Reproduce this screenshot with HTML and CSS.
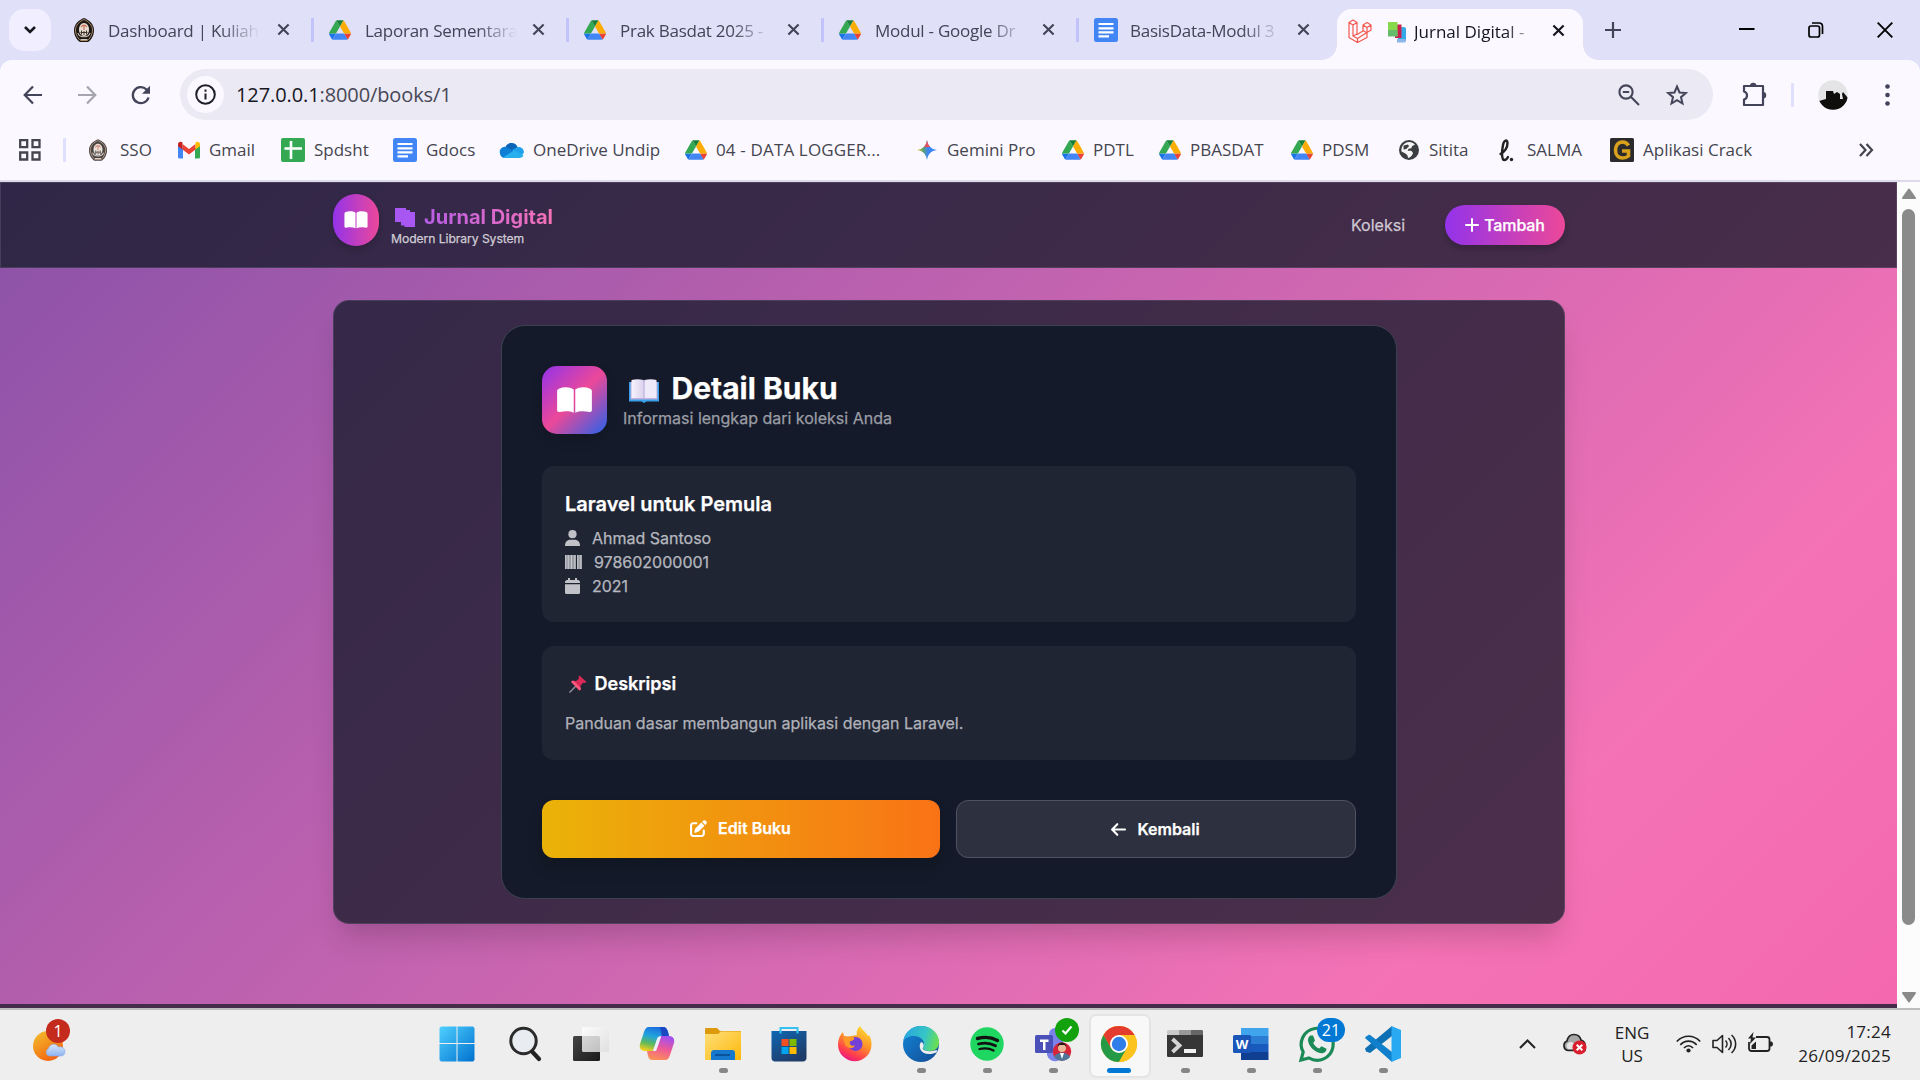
FILE: index.html
```html
<!DOCTYPE html>
<html lang="id">
<head>
<meta charset="utf-8">
<title>Jurnal Digital</title>
<link rel="stylesheet" href="styles.css">
</head>
<body>
<svg class="defs" aria-hidden="true">
  <defs>
    <linearGradient id="g-win" x1="0" y1="0" x2="1" y2="1"><stop offset="0" stop-color="#4fd0ff"/><stop offset="1" stop-color="#0071cf"/></linearGradient>
    <linearGradient id="g-sun" x1="0" y1="0" x2="0.6" y2="1"><stop offset="0" stop-color="#f2c22e"/><stop offset="1" stop-color="#f4640f"/></linearGradient>
    <linearGradient id="g-cloud" x1="0" y1="0" x2="0" y2="1"><stop offset="0" stop-color="#d9e8fd"/><stop offset="1" stop-color="#8db4ee"/></linearGradient>
    <linearGradient id="g-dark" x1="0" y1="0" x2="1" y2="1"><stop offset="0" stop-color="#444"/><stop offset="1" stop-color="#1b1b1b"/></linearGradient>
    <linearGradient id="g-light" x1="0" y1="0" x2="1" y2="1"><stop offset="0" stop-color="#fff"/><stop offset="1" stop-color="#ddd"/></linearGradient>
    <linearGradient id="g-cop1" x1="0.6" y1="0" x2="0.3" y2="1"><stop offset="0" stop-color="#1c6be0"/><stop offset="0.4" stop-color="#22a5dc"/><stop offset="0.7" stop-color="#5cb860"/><stop offset="1" stop-color="#f3cf1c"/></linearGradient>
    <linearGradient id="g-cop2" x1="0.6" y1="0" x2="0.3" y2="1"><stop offset="0" stop-color="#a14ff0"/><stop offset="0.5" stop-color="#ee5a96"/><stop offset="1" stop-color="#fb9255"/></linearGradient>
    <linearGradient id="g-fold" x1="0" y1="0" x2="1" y2="1"><stop offset="0" stop-color="#ffdf7b"/><stop offset="1" stop-color="#fdb80a"/></linearGradient>
    <linearGradient id="g-store" x1="0" y1="0" x2="0.6" y2="1"><stop offset="0" stop-color="#0f66b4"/><stop offset="1" stop-color="#1f3c68"/></linearGradient>
    <linearGradient id="g-fox" x1="0.8" y1="0" x2="0.3" y2="1"><stop offset="0" stop-color="#ffe033"/><stop offset="0.45" stop-color="#ff9328"/><stop offset="0.8" stop-color="#ff3a50"/><stop offset="1" stop-color="#e5158a"/></linearGradient>
    <linearGradient id="g-edge" x1="0" y1="0.3" x2="1" y2="0.5"><stop offset="0" stop-color="#2aa6df"/><stop offset="0.6" stop-color="#35c5c6"/><stop offset="1" stop-color="#6be04f"/></linearGradient>
    <linearGradient id="g-edge2" x1="0" y1="0" x2="1" y2="1"><stop offset="0" stop-color="#1187d8"/><stop offset="1" stop-color="#154a93"/></linearGradient>
    <linearGradient id="g-gem" x1="0" y1="0.5" x2="1" y2="0.5"><stop offset="0" stop-color="#f5c02c"/><stop offset="0.3" stop-color="#5aa469"/><stop offset="0.55" stop-color="#3d86f6"/><stop offset="1" stop-color="#3d86f6"/></linearGradient>
    <linearGradient id="g-page" x1="0" y1="0" x2="1" y2="0"><stop offset="0" stop-color="#f6f3fd"/><stop offset="1" stop-color="#dcd2ee"/></linearGradient>
  </defs>
  <symbol id="drive" viewBox="0 0 87.3 78">
    <path fill="#1a73e8" d="m6.6 66.85 3.85 6.65c.8 1.4 1.95 2.5 3.3 3.3L27.5 53H0c0 1.55.4 3.1 1.2 4.5z"/>
    <path fill="#34a853" d="M43.65 25 29.9 1.2c-1.35.8-2.5 1.9-3.3 3.3L1.2 48.5A9 9 0 0 0 0 53h27.5z"/>
    <path fill="#ea4335" d="M73.55 76.8c1.35-.8 2.5-1.9 3.3-3.3l1.6-2.75L86.1 57.5c.8-1.4 1.2-2.95 1.2-4.5H59.8l5.85 11.5z"/>
    <path fill="#188038" d="M43.65 25 57.4 1.2C56.05.4 54.5 0 52.9 0H34.4c-1.6 0-3.15.45-4.5 1.2z"/>
    <path fill="#4285f4" d="M59.8 53H27.5L13.75 76.8c1.35.8 2.9 1.2 4.5 1.2h50.8c1.6 0 3.15-.45 4.5-1.2z"/>
    <path fill="#fbad05" d="m73.4 26.5-12.7-22c-.8-1.4-1.95-2.5-3.3-3.3L43.65 25 59.8 53h27.45c0-1.55-.4-3.1-1.2-4.5z"/>
  </symbol>
  <symbol id="docs" viewBox="0 0 24 24">
    <rect width="24" height="24" rx="2.5" fill="#4285f4"/>
    <path stroke="#fff" stroke-width="2.2" d="M4.5 6h15M4.5 10.300h15M4.500 14.300h15M4.500 18.300h10.500"/>
  </symbol>
  <symbol id="crest" viewBox="0 0 20 24">
    <path fill="#1d1816" d="M10 0c5 2 10 6 10 12 0 6-3 10-6 12H6c-3-2-6-6-6-12C0 6 5 2 10 0z"/>
    <path fill="none" stroke="#a98a6b" d="M10 1.500c4.500 2 8.500 5.500 8.500 10.500 0 5-3 9-5 10.500h-7C4.500 21 1.500 17 1.500 12 1.500 7 5.500 3.500 10 1.500z"/>
    <path fill="#e9ddd2" d="M10 5c3 0 5 3 5 6.500S13 18 10 18s-5-3-5-6.500S7 5 10 5z"/>
    <path fill="none" stroke="#c9705a" stroke-width="1.200" d="M7 9c2-2.500 4-2.500 6 0M10 7v5"/>
    <path fill="none" stroke="#3b322d" stroke-width="1" d="M7.500 12.500v4M10 13v4M12.500 12.500v4M6.500 14.500h7"/>
    <path fill="none" stroke="#cfc6bb" stroke-width="1.200" d="M4 15c1 5 11 5 12 0M6.500 21.500h7"/>
  </symbol>
  <symbol id="close" viewBox="0 0 14 14"><path stroke="currentColor" stroke-width="2.300" d="M1.500 1.500l11 11M12.500 1.500l-11 11"/></symbol>
  <symbol id="book" viewBox="0 0 36 28">
    <path fill="#fff" d="M17.200 2.600v24.100c-4-1.800-9-1.900-14.500-.8C1.100 26.300 0 25.500 0 24.200V4.200C0 3 .6 2.200 1.800 1.700 7-.4 13-.3 17.200 2.600zM18.800 2.600v24.100c4-1.800 9-1.900 14.500-.8 1.600.4 2.700-.4 2.700-1.700v-20c0-1.200-.6-2-1.800-2.500C29-.4 23-.3 18.800 2.600z"/>
  </symbol>
</svg>

<div class="browser">
  <header class="tabstrip">
    <button class="tab-search"><svg width="14" height="10" viewBox="0 0 14 10"><path fill="none" stroke="#17171f" stroke-width="2.600" d="M2 2l5 5 5-5"/></svg></button>
    <div class="tab"><svg class="fav crest"><use href="#crest"/></svg><span class="label">Dashboard | Kuliah</span><svg class="x"><use href="#close"/></svg></div>
    <div class="tab"><svg class="fav"><use href="#drive"/></svg><span class="label">Laporan Sementara</span><svg class="x"><use href="#close"/></svg></div>
    <div class="tab"><svg class="fav"><use href="#drive"/></svg><span class="label">Prak Basdat 2025 -</span><svg class="x"><use href="#close"/></svg></div>
    <div class="tab"><svg class="fav"><use href="#drive"/></svg><span class="label">Modul - Google Dr</span><svg class="x"><use href="#close"/></svg></div>
    <div class="tab last"><svg class="fav docs"><use href="#docs"/></svg><span class="label">BasisData-Modul 3</span><svg class="x"><use href="#close"/></svg></div>
    <div class="tab active">
      <svg class="fav laravel" viewBox="0 0 24 24"><path fill="none" stroke="#f4574d" stroke-width="1.200" stroke-linejoin="round" d="M1 3.500L5 1l4 2.500v12l6-3.500V6l4-2.500L23 6v5l-4 2.500v5L9.500 23.500 1 18.500zM1 3.500L5 6l4-2.500M5 6v11l4.500 2.500L19 13.500M5 17l4-2M9.500 19.500v4M15 6l4 2.500L23 6M19 8.500v5M15 11.500l4 2.500"/></svg>
      <svg class="books" viewBox="0 0 18 21"><path fill="#35a9e8" d="M10 5.500l6-.5 2 1v13h-8z"/><path fill="#8cb5e8" d="M9 17h8.500v3.500H9z"/><path fill="#c8214d" d="M7 2.500h6.500V16H7z"/><path fill="#87d94b" d="M0 0h9.500v14H0z"/><path fill="#63bd6b" d="M0 8h9.500v6.500H0z"/></svg>
      <span class="label">Jurnal Digital -</span><svg class="x"><use href="#close"/></svg>
    </div>
    <svg class="newtab" width="16" height="16" viewBox="0 0 16 16"><path stroke="#43435a" stroke-width="2.200" d="M8 0v16M0 8h16"/></svg>
    <div class="winctl">
      <svg width="16" height="16" viewBox="0 0 16 16"><path stroke="#000" stroke-width="2" d="M0 7h15.500"/></svg>
      <svg width="16" height="16" viewBox="0 0 16 16"><rect x="1" y="4" width="10.500" height="11" rx="2" fill="none" stroke="#000" stroke-width="1.700"/><path fill="none" stroke="#000" stroke-width="1.700" d="M4 1h7c2 0 3.500 1.500 3.500 3.500V12"/></svg>
      <svg width="16" height="16" viewBox="0 0 16 16"><path stroke="#000" stroke-width="1.900" d="M.7.7l14.600 14.600M15.300.7L.7 15.300"/></svg>
    </div>
  </header>

  <div class="toolbar">
    <svg class="back" width="20" height="20" viewBox="0 0 20 20"><path fill="none" stroke="#43435a" stroke-width="2.200" d="M18 10H1M9 1.500L.7 10 9 18.500"/></svg>
    <svg class="fwd" width="20" height="20" viewBox="0 0 20 20"><path fill="none" stroke="#a6a5af" stroke-width="2.200" d="M0 10h17M9 1.500l8.300 8.500L9 18.500"/></svg>
    <svg class="reload" width="20" height="20" viewBox="0 0 20 20"><path fill="none" stroke="#43435a" stroke-width="2.300" d="M17.500 12.500A8 8 0 1 1 15.500 4.500L18 7"/><path fill="#43435a" d="M19 .8v8h-8z"/></svg>
    <div class="omnibox">
      <span class="info"><svg width="21" height="21" viewBox="0 0 21 21"><circle cx="10.500" cy="10.500" r="9.300" fill="none" stroke="#1f1f27" stroke-width="2"/><path stroke="#1f1f27" stroke-width="2" d="M10.500 9.500v6M10.500 5.500v2.200"/></svg></span>
      <span class="url"><b>127.0.0.1</b>:8000/books/1</span>
      <svg class="mag" width="22" height="22" viewBox="0 0 22 22"><g fill="none" stroke="#45455a" stroke-width="2.100"><circle cx="8" cy="8" r="6.600"/><path d="M12.800 12.800L21 21M4.800 8h6.400"/></g></svg>
      <svg class="star" width="22" height="22" viewBox="0 0 22 22"><path fill="none" stroke="#45455a" stroke-width="2" d="M11 2.500l2.500 6 6.300.5-4.800 4.200 1.500 6.300L11 16.200l-5.500 3.300L7 13.200 2.200 9l6.300-.5z"/></svg>
    </div>
    <svg class="ext" width="25" height="25" viewBox="0 0 25 25"><path fill="none" stroke="#43435a" stroke-width="2.200" stroke-linejoin="round" d="M2 4h19v19H2v-5.500c4-1 4-7 0-8z"/><path fill="#43435a" d="M8 4a3.200 3.200 0 0 1 6.400 0zM21 10a3.200 3.200 0 0 1 0 6.500z"/></svg>
    <i class="vbar"></i>
    <svg class="avatar" width="30" height="30" viewBox="0 0 30 30"><clipPath id="av"><circle cx="15" cy="15" r="14.800"/></clipPath><g clip-path="url(#av)"><path fill="#e4e4e6" d="M0 0h30v30H0z"/><path fill="#100e0d" d="M1 21l7-2V11h7l1 3 3-2 3 2v5h3l-1-5 1-2 5 6v13H3z"/></g></svg>
    <svg class="menu" width="5" height="22" viewBox="0 0 5 22"><g fill="#43435a"><circle cx="2.500" cy="2.500" r="2.300"/><circle cx="2.500" cy="11" r="2.300"/><circle cx="2.500" cy="19.500" r="2.300"/></g></svg>
  </div>

  <nav class="bookmarks">
    <svg class="apps" width="22" height="22" viewBox="0 0 22 22"><g fill="none" stroke="#45454f" stroke-width="2.300"><path d="M1.200 1.200h7v7h-7zM13.500 1.200h7v7h-7zM1.200 13.500h7v7h-7zM13.500 13.500h7v7h-7z"/></g></svg>
    <i class="vbar"></i>
    <a><svg class="s20"><use href="#crest"/></svg>SSO</a>
    <a><svg class="s22" viewBox="0 0 22 17"><path fill="#4285f4" d="M0 3l5 4v10H1.500A1.500 1.500 0 0 1 0 15.500z"/><path fill="#34a853" d="M22 3l-5 4v10h3.500a1.500 1.500 0 0 0 1.500-1.500z"/><path fill="#ea4335" d="M4.500 2.500L11 7.500l6.500-5V8L11 13 4.500 8z"/><path fill="#c5221f" d="M0 3C0 .5 2.500-.6 4.500 1V8L0 4.800z"/><path fill="#fbbc04" d="M22 3c0-2.500-2.500-3.600-4.500-2V8L22 4.800z"/></svg>Gmail</a>
    <a><svg class="s24" viewBox="0 0 24 24"><rect width="24" height="24" rx="2" fill="#34a853"/><path stroke="#fff" stroke-width="2.600" d="M10 3v18M3.500 10.500h17.500"/></svg>Spdsht</a>
    <a><svg class="s24"><use href="#docs"/></svg>Gdocs</a>
    <a><svg class="s24" viewBox="0 0 24 16"><path fill="#0c64b8" d="M5 7a6.500 6.500 0 0 1 12.500-2L12 11z"/><path fill="#0f7fd6" d="M0 11.500A5 5 0 0 1 6 5l8 4-9 7A4.700 4.700 0 0 1 0 11.500z"/><path fill="#1fa0ea" d="M12 8l5.500-3A5.500 5.500 0 0 1 24 10.500L20 15z"/><path fill="#28b0ee" d="M3 15.500L14 8.500l9.500 4.500c-.6 2-2 3-4 3H5c-1 0-1.500-.2-2-.500z"/></svg>OneDrive Undip</a>
    <a class="wide"><svg class="s22"><use href="#drive"/></svg>04 - DATA LOGGER...</a>
    <a><svg class="s22" viewBox="0 0 22 22"><path fill="url(#g-gem)" d="M11 0c1 6.500 4.500 10 11 11-6.500 1-10 4.500-11 11-1-6.500-4.500-10-11-11C6.500 10 10 6.500 11 0z"/><path fill="#e8505a" d="M11 0c.5 3.500 1.800 6 3.500 7.800L7.500 8C9.300 6 10.500 3.500 11 0z"/></svg>Gemini Pro</a>
    <a><svg class="s22"><use href="#drive"/></svg>PDTL</a>
    <a><svg class="s22"><use href="#drive"/></svg>PBASDAT</a>
    <a><svg class="s22"><use href="#drive"/></svg>PDSM</a>
    <a><svg class="s22" viewBox="0 0 22 22"><circle cx="11" cy="11" r="11" fill="#3b3e41"/><path fill="#fff" d="M11 2.200c3 0 5 1 6.500 3l-3 1.500-1 2.500-3 .500-1 2h4l2 2.500-1.500 3-3 2.500c-1 0-1.500-1-1.500-2.500l-2-2-4.800-2.500C2 7 6 2.200 11 2.200z" opacity=".95"/><path fill="#3b3e41" d="M5 6l5-1 1 2-3 3-3 .5z"/></svg>Sitita</a>
    <a><svg class="s16" viewBox="0 0 16 24"><path fill="none" stroke="#222" stroke-width="2.400" stroke-linecap="round" d="M2.500 16c5-3 7-7 7-11S6 2 5 7s-2 15 1.500 15c1.500 0 2.500-1 3.500-3"/><circle cx="13.500" cy="21.500" r="1.700" fill="#222"/></svg>SALMA</a>
    <a><svg class="s24" viewBox="0 0 24 24"><rect width="24" height="24" rx="1.500" fill="#2b2b2d"/><path fill="none" stroke="#d9a11c" stroke-width="3.600" d="M18.500 7.500C17 5 15 4 12.500 4 8 4 5.500 7.500 5.500 12s2.500 8 7 8c2.500 0 4.500-.7 6-2v-5H12"/></svg>Aplikasi Crack</a>
    <svg class="more" width="14" height="14" viewBox="0 0 14 14"><path fill="none" stroke="#45454f" stroke-width="2.200" d="M1 1l5.500 6L1 13M7.500 1L13 7l-5.500 6"/></svg>
  </nav>

  <div class="viewport">
    <div class="page">
      <div class="navbar">
        <div class="brand-icon"><svg width="24" height="18"><use href="#book"/></svg></div>
        <div class="brand">
          <div class="brand-name"><svg width="20" height="19" viewBox="0 0 20 19"><path fill="#a957f3" d="M0 0h11v2h4v2h5v15H9.500v-1.500H6V14H0z"/></svg><span>Jurnal Digital</span></div>
          <div class="brand-sub">Modern Library System</div>
        </div>
        <a class="link">Koleksi</a>
        <a class="add"><svg width="14" height="14" viewBox="0 0 14 14"><path stroke="#fff" stroke-width="2" stroke-linecap="round" d="M7 1v12M1 7h12"/></svg>Tambah</a>
      </div>
      <main class="shell">
        <section class="card">
          <div class="head">
            <div class="head-icon"><svg width="35" height="27"><use href="#book"/></svg></div>
            <div>
              <h1><svg width="30" height="24" viewBox="0 0 30 24"><path fill="#3aa0ea" d="M0 3h30v19.500H17.500l-2.500 1.500-2.500-1.500H0z"/><path fill="#bfb3dc" d="M1.500 3h27v17.500h-27z"/><path fill="url(#g-page)" d="M2.500 1Q9-.5 14.500 1v18H2.500z"/><path fill="#efeaf9" d="M15.500 1Q22-.5 27.500 1v18h-12z"/><path fill="#cfc3e8" d="M14.200 1h1.600v18h-1.600z"/></svg>Detail Buku</h1>
              <p class="lead">Informasi lengkap dari koleksi Anda</p>
            </div>
          </div>
          <div class="box info-box">
            <h2>Laravel untuk Pemula</h2>
            <p><svg width="15" height="16" viewBox="0 0 15 16"><circle cx="7.500" cy="4.200" r="4.100" fill="#c0c2c8"/><path fill="#c0c2c8" d="M0 16c0-4 2-6.200 5.500-6.200h4C13 9.800 15 12 15 16z"/></svg>Ahmad Santoso</p>
            <p><svg width="17" height="14" viewBox="0 0 17 14"><path fill="#9a9ca5" d="M0 0h11v14H0zM12 0h5v14h-5z"/><path stroke="#c6c8cd" d="M.7 0v14M3.300 0v14M6.500 0v14M9.800 0v14M12.800 0v14M15.800 0v14"/></svg>978602000001</p>
            <p><svg width="15" height="16" viewBox="0 0 15 16"><path fill="#c0c2c8" d="M3 0h2v2h5V0h2v2h1.500L15 3.500V5H0V3.500L1.500 2H3zM0 6.200h15v8.300a1.500 1.500 0 0 1-1.500 1.500h-12A1.500 1.500 0 0 1 0 14.500z"/></svg>2021</p>
          </div>
          <div class="box desc-box">
            <h3><svg width="18" height="18" viewBox="0 0 18 18"><path stroke="#9b98a3" stroke-width="1.300" d="M.5 17.500L7 11"/><path fill="#d92a57" d="M10.500.5l7 6.500-1.800 1-1.700-.3-2.500 3 .3 3.800-1.300 1L2.200 7l1-1.300 4 .3L10 3.500 9.500 2z"/><path fill="#fb5c80" d="M2.200 7l8.300 8.500 1.300-1-.1-1.500L4.500 5.800l-1.300-.1z"/></svg>Deskripsi</h3>
            <p>Panduan dasar membangun aplikasi dengan Laravel.</p>
          </div>
          <div class="actions">
            <a class="btn edit"><svg width="17" height="17" viewBox="0 0 512 512"><path fill="#fff" d="M471.600 21.700c-21.900-21.900-57.300-21.900-79.200 0L362.300 51.700l97.900 97.900 30.100-30.100c21.900-21.900 21.900-57.300 0-79.200L471.600 21.700zm-299.200 220c-6.100 6.100-10.800 13.600-13.500 21.900l-29.600 88.800c-2.900 8.600-.6 18.100 5.800 24.600s15.900 8.700 24.600 5.800l88.800-29.600c8.200-2.700 15.700-7.400 21.900-13.500L437.700 172.300 339.700 74.300 172.400 241.700zM96 64C43 64 0 107 0 160V416c0 53 43 96 96 96H352c53 0 96-43 96-96V320c0-17.700-14.300-32-32-32s-32 14.300-32 32v96c0 17.700-14.300 32-32 32H96c-17.700 0-32-14.300-32-32V160c0-17.700 14.300-32 32-32h96c17.700 0 32-14.300 32-32s-14.300-32-32-32H96z"/></svg>Edit Buku</a>
            <a class="btn backbtn"><svg width="15" height="13" viewBox="0 0 15 13"><path fill="none" stroke="#fff" stroke-width="2.100" stroke-linecap="round" stroke-linejoin="round" d="M14 6.500H1.200M6.300 1.200L1.100 6.500l5.200 5.300"/></svg>Kembali</a>
          </div>
        </section>
      </main>
      <footer class="foot"></footer>
    </div>
    <div class="scroll">
      <svg width="16" height="12" viewBox="0 0 16 12"><path fill="#8a8a8a" stroke="#8a8a8a" stroke-linejoin="round" stroke-width="2" d="M8 1.500L14 10H2z"/></svg>
      <i class="thumb"></i>
      <svg width="16" height="12" viewBox="0 0 16 12"><path fill="#8a8a8a" stroke="#8a8a8a" stroke-linejoin="round" stroke-width="2" d="M8 10.500L14 2H2z"/></svg>
    </div>
  </div>
</div>

<div class="taskbar">
  <div class="weather">
    <svg width="40" height="44" viewBox="0 0 40 44"><circle cx="17" cy="26" r="15" fill="url(#g-sun)"/><path fill="url(#g-cloud)" stroke="#86a9e4" stroke-width=".6" d="M18 36a4 4 0 0 1-.5-7.500c1-5 8-6 9.500-1.500 4-1 7 1.500 7 4.500s-2 4.500-4.500 4.500z"/></svg>
    <span class="count red">1</span>
  </div>
  <div class="apps-row">
    <div class="slot first"><svg viewBox="0 0 36 36"><path fill="url(#g-win)" d="M2 .5h15.500V17H.5V2zM18.500.5H34L35.500 2v15h-17zM.5 18h17v17.500H2L.5 34zM18.500 18h17v16L34 35.500H18.500z"/></svg></div>
    <div class="slot"><svg viewBox="0 0 36 36"><circle cx="16.500" cy="15" r="12.700" fill="#e9edf1" stroke="#2b2b2b" stroke-width="3"/><path stroke="#222" stroke-width="4.200" stroke-linecap="round" d="M25.500 26l6.500 7"/></svg></div>
    <div class="slot"><svg viewBox="0 0 36 36"><rect y="10" width="27" height="25" rx="1.500" fill="url(#g-dark)"/><rect x="9" y="1" width="27" height="25" rx="1.500" fill="url(#g-light)" opacity=".82"/></svg></div>
    <div class="slot"><svg viewBox="0 0 36 36"><path fill="url(#g-cop1)" d="M10 1h14c3 0 4 2 5 5l1 4h-8c-2 0-3 1-4 3l-4 12H6c-4 0-6-3-5-7L5 6c1-3 2-5 5-5z"/><path fill="#1a48c2" d="M21 1h3c3 0 4 2 5 5l1 4h-7z"/><path fill="url(#g-cop2)" d="M26 34H14c-3 0-4-1-5-4l-1-5h6c2 0 3-1 4-3l4-12h8c4 0 6 3 5 7l-4 12c-1 3-2 5-5 5z"/><path fill="#eef" d="M19 11h3l-5 14h-3z"/></svg></div>
    <div class="slot run"><svg viewBox="0 0 36 36"><path fill="#dc9a0c" d="M0 3.500C0 2.500.5 2 1.500 2H12l3 3h21v6H0z"/><path fill="url(#g-fold)" d="M0 8h13l3-2.500h20V34H0z"/><path fill="#1578cc" d="M6 34v-7c0-2 1.500-3 3-3h18c2 0 3 1 3 3v7z"/><path stroke="#0b4f97" stroke-width="1.800" d="M10 29h15"/></svg></div>
    <div class="slot"><svg viewBox="0 0 36 36"><path fill="none" stroke="#35c2f2" stroke-width="2" d="M9.500 8V2h17v6"/><path fill="url(#g-store)" d="M.5 5h35v27c0 2-1.500 3.500-3.500 3.500H4c-2 0-3.500-1.500-3.500-3.500z"/><path fill="none" stroke="#35c2f2" stroke-width="2" d="M9.500 5v2.500M26.500 5v2.500"/><path fill="#f25022" d="M10.500 13h7v7h-7z"/><path fill="#7fba00" d="M18.500 13h7v7h-7z"/><path fill="#00a4ef" d="M10.500 21h7v7h-7z"/><path fill="#ffb900" d="M18.500 21h7v7h-7z"/></svg></div>
    <div class="slot"><svg viewBox="0 0 36 36"><path fill="url(#g-fox)" d="M23 0c2 4 6 6 8 10l1-1c2 3 2.500 6 2.500 9.500A16.700 16.700 0 0 1 1 18.500C1 13 3 9 6 6l1 4 4 .500L20 9c-1-3 0-6 3-9z"/><circle cx="18.500" cy="18" r="7" fill="#7440d8"/><path fill="#ff9a28" d="M6 11l11 .5c1 2-1 3-4 4-1 3 1 5 5 4-2 4-8 3-10-1z"/></svg></div>
    <div class="slot run"><svg viewBox="0 0 36 36"><circle cx="18" cy="18" r="18" fill="url(#g-edge2)"/><path fill="url(#g-edge)" d="M.3 15C2 6 9 0 18 0c10 0 18 7 18 16 0 6-4 9-9 9-4 0-7-1-7-3 0-1 1-2 1-4 0-4-4-8-10-8-5 0-9 2-10.700 5z"/><path fill="#eee" d="M18 16c-3 4-1 12 8 12 3 0 5-.5 8-2-1 2-2 3-3 4 2-2 3-4 3-6-3 1-6 1.500-9 1-4-.5-6-1.500-5-3.500 1-1.500 1.500-4-2-5.500z"/></svg></div>
    <div class="slot run"><svg viewBox="0 0 36 36"><circle cx="18" cy="18" r="16.700" fill="#1fd661"/><g fill="none" stroke="#121212" stroke-linecap="round"><path stroke-width="3.400" d="M8.500 12.500c7-2 14-1.300 20 2"/><path stroke-width="2.800" d="M9.500 18c6-1.600 12-1 17 1.800"/><path stroke-width="2.300" d="M10.500 23c5-1.200 10-.8 14 1.500"/></g></svg></div>
    <div class="slot run teams"><svg viewBox="0 0 36 36"><circle cx="20" cy="8" r="6" fill="#7b83eb"/><path fill="#7b83eb" d="M12 13h16v12a8 8 0 0 1-16 4z"/><rect y="9" width="18" height="18" rx="1.500" fill="#4b50b8"/><path fill="#fff" d="M5 13.500h8.500V16h-3v8H8v-8H5z"/><circle cx="27" cy="25.500" r="9.200" fill="#d72638"/><circle cx="27" cy="22" r="4" fill="#eab99c"/><path fill="#2a1a17" d="M22.500 21c0-6 9-6 9 0l-2-2h-5z"/><path fill="#4d7698" d="M19 31c3-6 13-6 16 0-4 5-12 5-16 0z"/><path fill="#fff" d="M25 27h4l-2 6z"/></svg><span class="check"><svg viewBox="0 0 12 10"><path fill="none" stroke="#fff" stroke-width="2.200" d="M1.500 5.500L4.500 8.500 10.500 1.500"/></svg></span></div>
    <div class="slot focus"><svg viewBox="0 0 36 36"><circle cx="18" cy="18" r="18" fill="#fcc31e"/><path fill="#e33b2e" d="M2.400 9A18 18 0 0 1 33.600 9H18l-7.800 13.500z"/><path fill="#259a46" d="M2.400 9A18 18 0 0 0 18 36l7.800-13.500-15.600 0z"/><path fill="#fcc31e" d="M33.600 9A18 18 0 0 1 18 36l7.800-13.500L26 9z"/><circle cx="18" cy="18" r="9" fill="#fff"/><circle cx="18" cy="18" r="7.200" fill="#2f7de9"/></svg></div>
    <div class="slot run"><svg viewBox="0 0 36 36"><path fill="#363636" d="M0 9h36v20.500c0 1-.5 1.500-1.500 1.500h-33C.5 31 0 30.500 0 29.500z"/><path fill="#c9c9c9" d="M0 9V5.500C0 4.500.5 4 1.500 4H12v5z"/><path fill="#999" d="M12 4h12v5H12z"/><path fill="#666" d="M24 4h10.500c1 0 1.500.500 1.500 1.500V9H24z"/><path fill="none" stroke="#d5d5d5" stroke-width="3.800" d="M5.500 13l7 6.500-7 6.500"/><path fill="#f2f2f2" d="M17 23h12v4H17z"/></svg></div>
    <div class="slot run"><svg viewBox="0 0 36 36"><path fill="#41a5ee" d="M8 2h27.500v8H8z"/><path fill="#2b7cd3" d="M8 10h27.500v8H8z"/><path fill="#185abd" d="M8 18h27.500v8H8z"/><path fill="#103f91" d="M8 26h27.500v8H8z"/><rect y="9" width="18" height="18" rx="1.500" fill="#1a56b8"/></svg><b class="w">W</b></div>
    <div class="slot run"><svg viewBox="0 0 36 36"><path fill="none" stroke="#1b8a57" stroke-width="3.200" d="M2 34l2.200-8A16 16 0 1 1 10 32z"/><path fill="#1b8a57" d="M11.500 9.500l2.500 0 2 5-1.800 2.500c1.500 3 3.500 4.500 6 5.500l2.300-2.300 5 2.500c0 3-2.500 4.500-5 4.500-7-1-13-7-13.500-13 0-2 1-4 2.500-4.700z"/></svg><span class="count blue">21</span></div>
    <div class="slot run"><svg viewBox="0 0 36 36"><path fill="#0d70b5" d="M1 25.500l-1-3L27 0v10L5 27z"/><path fill="#1180cc" d="M1 10.500l3.500-2L27 26v10L0 12z"/><path fill="#29a9f2" d="M26.500 0L36 4v28l-9.500 4z"/></svg></div>
  </div>
  <div class="tray">
    <svg class="chev" width="17" height="10" viewBox="0 0 17 10"><path fill="none" stroke="#222" stroke-width="2" d="M1 9l7.500-7.500L16 9"/></svg>
    <svg class="cloud" width="25" height="22" viewBox="0 0 25 22"><path fill="#a8a8a8" stroke="#222" stroke-width="1.700" d="M6 17.500a5 5 0 0 1-1-9.500C6 3 9 1.500 12 1.500S18 3 19 7c3 1 4 3 4 5v5.500z"/><path fill="#e5e5e5" d="M6 16a4 4 0 0 1 2-7c4 0 6 3 7 7z"/><circle cx="17.500" cy="14.500" r="7" fill="#d91f2d"/><path stroke="#fff" stroke-width="2" d="M14.700 11.700l5.600 5.600M20.300 11.700l-5.600 5.600"/></svg>
    <div class="lang">ENG<br>US</div>
    <svg class="wifi" width="25" height="18" viewBox="0 0 25 18"><g fill="none" stroke="#222" stroke-width="1.700"><path d="M.8 6.500c6.500-7 17-7 23.400 0M4.300 9.800c4.700-5 11.700-5 16.400 0M8 13c2.700-3 6.300-3 9 0"/></g><circle cx="12.500" cy="15.500" r="2.100" fill="#222"/></svg>
    <svg class="vol" width="25" height="20" viewBox="0 0 25 20"><path fill="none" stroke="#222" stroke-width="1.600" stroke-linejoin="round" d="M1 6.500h4L10.500 1.500v17L5 13.500H1zM13.500 6.500c2 2 2 5 0 7M16.500 4c3.500 3.500 3.500 8.500 0 12M19.500 1c5.500 5 5.500 13 0 18"/></svg>
    <svg class="batt" width="25" height="20" viewBox="0 0 25 20"><path fill="none" stroke="#222" stroke-width="1.800" d="M8 3h11c1.500 0 2.500 1 2.500 2.500v9c0 1.500-1 2.500-2.500 2.500H3.500C2 17 1 16 1 14.500V8"/><path fill="#222" d="M22 7.500h1.500c2 1 2 4 0 5H22zM5.500-2L0 4.500h3L2 10l6-6.500H4.500zM3.500 11.500L8 7.500v7.500H3.500z"/></svg>
    <div class="clock">17:24<br>26/09/2025</div>
  </div>
</div>
</body>
</html>
```
FILE: styles.css
```css
* { box-sizing: border-box; }
html, body { margin: 0; height: 100%; overflow: hidden; }
body { width: 1920px; height: 1080px; display: flex; flex-direction: column; background: #eee; font-family: "Open Sans", "Noto Sans", sans-serif; }
svg { display: block; flex: none; overflow: visible; }
.defs { position: absolute; width: 0; height: 0; }
h1, h2, h3, p { margin: 0; }

/* browser chrome */
.browser { height: 1008px; display: flex; flex-direction: column; background: #e0e0f8; }
.tabstrip { height: 60px; flex: none; display: flex; align-items: center; padding-left: 9px; }
.tab-search { width: 42px; height: 42px; border: 0; border-radius: 15px; background: #f0eeff; display: grid; place-items: center; padding: 0; }
.tab { width: 255px; height: 24px; display: flex; align-items: center; padding-left: 15px; border-right: 3px solid #c2c3fb; color: #43435a; }
.tab-search + .tab { margin-left: 8px; }
.tab.last { border-right-color: transparent; }
.fav { width: 22px; height: 22px; }
.fav.crest { width: 20px; height: 24px; }
.fav.docs, .fav.laravel { width: 24px; height: 24px; }
.label { width: 152px; margin-left: 14px; margin-top: 2px; overflow: hidden; white-space: nowrap; font-size: 17px; line-height: 26px; letter-spacing: -0.25px; -webkit-mask-image: linear-gradient(90deg, #000 112px, transparent 152px); mask-image: linear-gradient(90deg, #000 112px, transparent 152px); }
.docs + .label { margin-left: 12px; }
.x { width: 13px; height: 13px; margin-left: 15px; margin-top: -1px; }
.crest ~ .x { margin-left: 17px; }
.tab.active { position: relative; width: 246px; height: 51px; margin: 9px 0 0 3px; padding: 0 0 7px 11px; border: 0; border-radius: 15px 15px 0 0; background: #fbf9ff; color: #15151f; }
.tab.active::before, .tab.active::after { content: ""; position: absolute; bottom: 0; width: 15px; height: 15px; }
.tab.active::before { left: -15px; background: radial-gradient(circle at 0 0, transparent 14.5px, #fbf9ff 15px); }
.tab.active::after { right: -15px; background: radial-gradient(circle at 100% 0, transparent 14.5px, #fbf9ff 15px); }
.books { width: 18px; height: 21px; margin-left: 16px; margin-top: 3px; }
.active .label { width: 120px; margin-left: 8px; letter-spacing: 0; -webkit-mask-image: linear-gradient(90deg, #000 92px, transparent 122px); mask-image: linear-gradient(90deg, #000 92px, transparent 122px); }
.active .x { margin-left: 18px; }
.newtab { margin-left: 22px; }
.winctl { display: flex; gap: 53px; margin-left: auto; margin-right: 27px; }

.toolbar { height: 69px; flex: none; display: flex; align-items: center; background: #fbf9ff; border-radius: 12px 12px 0 0; padding: 0 0 0 24px; }
.fwd { margin-left: 34px; }
.reload { margin-left: 33px; }
.omnibox { width: 1533px; height: 51px; margin-left: 29px; border-radius: 26px; background: #ebe9f3; display: flex; align-items: center; padding: 0 25px 0 7px; }
.info { width: 37px; height: 37px; border-radius: 50%; background: #fbf9ff; display: grid; place-items: center; }
.url { margin-left: 12px; font-size: 20px; letter-spacing: -0.1px; color: #474755; }
.url b { font-weight: 400; color: #17171f; }
.mag { margin-left: auto; }
.star { margin-left: 26px; }
.ext { margin-left: 29px; }
.vbar { width: 3px; height: 24px; background: #dfe0fd; border-radius: 1px; }
.toolbar .vbar { margin-left: 24px; }
.avatar { margin-left: 24px; }
.menu { margin-left: 37px; }

.bookmarks { height: 53px; flex: none; background: #fbf9ff; border-bottom: 2px solid #dddbeb; display: grid; align-items: center; padding: 0 0 9px 19px;
  grid-template-columns: 44px 26px 89px 103px 112px 107px 185px 231px 146px 97px 132px 107px 100px 112px 249px 14px; }
.bookmarks a { display: flex; align-items: center; gap: 9px; white-space: nowrap; font-size: 17px; line-height: 24px; letter-spacing: 0; color: #45454f; }
.bookmarks .wide { letter-spacing: 0.15px; }
.s16 { width: 16px; height: 24px; margin-right: 4px; }
.s20 { width: 18px; height: 22px; margin-right: 4px; opacity: .8; }
.s22 { width: 22px; height: 20px; }
.s24 { width: 24px; height: 24px; }

/* web page */
.viewport { flex: 1; display: flex; min-height: 0; }
.page { width: 1897px; display: flex; flex-direction: column; font-family: Inter, "Liberation Sans", sans-serif; -webkit-text-stroke: .25px currentColor; background: linear-gradient(135deg, #8a52a8 0%, #f472b6 80%, #f468b0 100%); }
.navbar { height: 86px; flex: none; display: flex; align-items: center; padding: 0 332px 0 333px; background: rgba(17, 24, 39, .75); border: 1px solid rgba(255, 255, 255, .1); }
.brand-icon { width: 46px; height: 52px; margin: -11px 0 0 -1px; border-radius: 24px; background: linear-gradient(90deg, #9333ea, #ec4899); display: grid; place-items: center; box-shadow: 0 4px 6px rgba(0, 0, 0, .15); }
.brand { margin-left: 12px; margin-top: 1px; }
.brand-name { display: flex; align-items: center; height: 26px; padding-left: 4px; gap: 9px; font-size: 20px; font-weight: 700; -webkit-text-stroke: 0; }
.brand-name span { background: linear-gradient(90deg, #b85ee5, #f472b6); -webkit-background-clip: text; background-clip: text; color: transparent; }
.brand-sub { font-size: 12.200px; letter-spacing: -.08px; line-height: 17px; color: #cfccd5; }
.link { margin-left: auto; font-size: 16px; color: #cfc9d1; margin-top: -1px; }
.add { width: 120px; height: 40px; margin: -1px -1px 0 40px; border-radius: 20px; display: flex; align-items: center; justify-content: center; gap: 5px; color: #fff; font-size: 16px; font-weight: 500; letter-spacing: -.1px; background: linear-gradient(90deg, #9333ea, #ec4899); box-shadow: 0 4px 6px rgba(0, 0, 0, .2); }
.shell { width: 1232px; height: 624px; margin: 32px auto 0; padding-top: 24px; border: 1px solid rgba(255, 255, 255, .1); border-radius: 16px; background: rgba(17, 24, 39, .75); box-shadow: 0 20px 30px -8px rgba(0, 0, 0, .18); }
.card { width: 896px; height: 574px; margin: 0 auto; padding: 40px 40px 0; border: 1px solid #3c4150; border-radius: 24px; background: #141a29; }
.head { display: flex; height: 68px; }
.head-icon { width: 65px; height: 68px; border-radius: 15px; background: linear-gradient(135deg, #9333ea, #ec4899 50%, #2563eb); display: grid; place-items: center; box-shadow: 0 6px 12px rgba(0, 0, 0, .12); }
h1 { display: flex; align-items: center; gap: 13px; margin: 4px 0 0 22px; font-size: 30px; line-height: 36px; font-weight: 700; color: #fff; }
h1 svg { margin-top: 6px; }
.lead { margin-left: 16.500px; font-size: 16px; line-height: 24px; color: #9b9da5; }
.box { border-radius: 12px; background: #202534; padding: 0 23px; }
.info-box { height: 156px; margin-top: 32px; padding-top: 24px; }
h2 { font-size: 20px; line-height: 28px; font-weight: 600; color: #fff; margin-bottom: 8px; padding-left: .5px; }
.info-box p { display: flex; align-items: center; gap: 12.500px; height: 24px; font-size: 16px; color: #b6b8bf; }
.desc-box { height: 114px; margin-top: 24px; padding-top: 24px; }
h3 { display: flex; align-items: center; gap: 8px; padding-left: 4px; font-size: 18px; line-height: 28px; font-weight: 600; color: #fff; }
.desc-box p { margin-top: 13px; padding-left: .5px; font-size: 16px; line-height: 24px; color: #b0b2b9; }
.actions { display: flex; gap: 16px; margin-top: 40px; }
.btn { height: 58px; flex: 1; border-radius: 12px; display: flex; align-items: center; justify-content: center; gap: 12px; color: #fff; font-size: 16px; font-weight: 600; }
.edit { padding: 0 0 2px 0; background: linear-gradient(90deg, #eab308, #f97316); box-shadow: 0 10px 15px rgba(0, 0, 0, .15); gap: 11px; }
.backbtn { gap: 11px; background: #2d303e; border: 1px solid #50535f; }
.foot { margin-top: auto; height: 4px; background: #452c4b; }
.scroll { width: 23px; background: #fcfcfc; display: flex; flex-direction: column; align-items: center; padding: 6px 0 5px; }
.thumb { width: 13px; height: 716px; margin: 9px 0 auto; border-radius: 7px; background: #8a8a8a; }

/* taskbar */
.taskbar { height: 72px; border-top: 2px solid #bdbdbf; padding-bottom: 2px; background: #eee; display: flex; align-items: center; color: #222; }
.weather { position: relative; width: 40px; height: 44px; margin-left: 31px; margin-top: -5px; }
.count { position: absolute; height: 24px; border-radius: 12px; color: #fff; display: grid; place-items: center; font-size: 16px; }
.red { width: 24px; left: 15px; top: -1px; background: #c42b1c; }
.blue { width: 28px; left: 33px; top: 3px; background: #0078d4; }
.apps-row { display: flex; margin-left: 353px; }
.slot { position: relative; width: 66px; height: 58px; display: grid; place-items: center; }
.slot.first { margin-right: 2px; }
.slot > svg { width: 36px; height: 36px; }
.run::after, .focus::after { content: ""; position: absolute; left: 28.500px; bottom: 0; width: 9px; height: 5px; border-radius: 3px; background: #868686; }
.focus::before { content: ""; position: absolute; left: 3px; top: -1px; width: 58px; height: 60px; border: 2px solid #e4e4e4; border-radius: 7px; background: #f8f8f8; }
.focus > svg { position: relative; }
.focus::after { left: 21px; width: 24px; background: #0078d4; }
.check { position: absolute; left: 35px; top: 3px; width: 24px; height: 24px; border-radius: 50%; background: #13a10e; display: grid; place-items: center; }
.check svg { width: 12px; height: 10px; }
.w { position: absolute; left: 15px; top: 19px; width: 18px; text-align: center; color: #fff; font-size: 13px; line-height: 20px; }
.tray { flex: 1; display: flex; align-items: center; }
.chev { margin-left: 103px; }
.cloud { margin-left: 26px; }
.lang { margin-left: 27px; width: 36px; text-align: center; font-size: 17px; line-height: 23px; letter-spacing: -.1px; white-space: nowrap; }
.wifi { margin-left: 26px; }
.vol { margin-left: 11px; }
.batt { margin-left: 11px; }
.clock { margin-left: auto; margin-right: 29px; text-align: right; font-size: 17px; line-height: 24px; letter-spacing: .25px; }
```
